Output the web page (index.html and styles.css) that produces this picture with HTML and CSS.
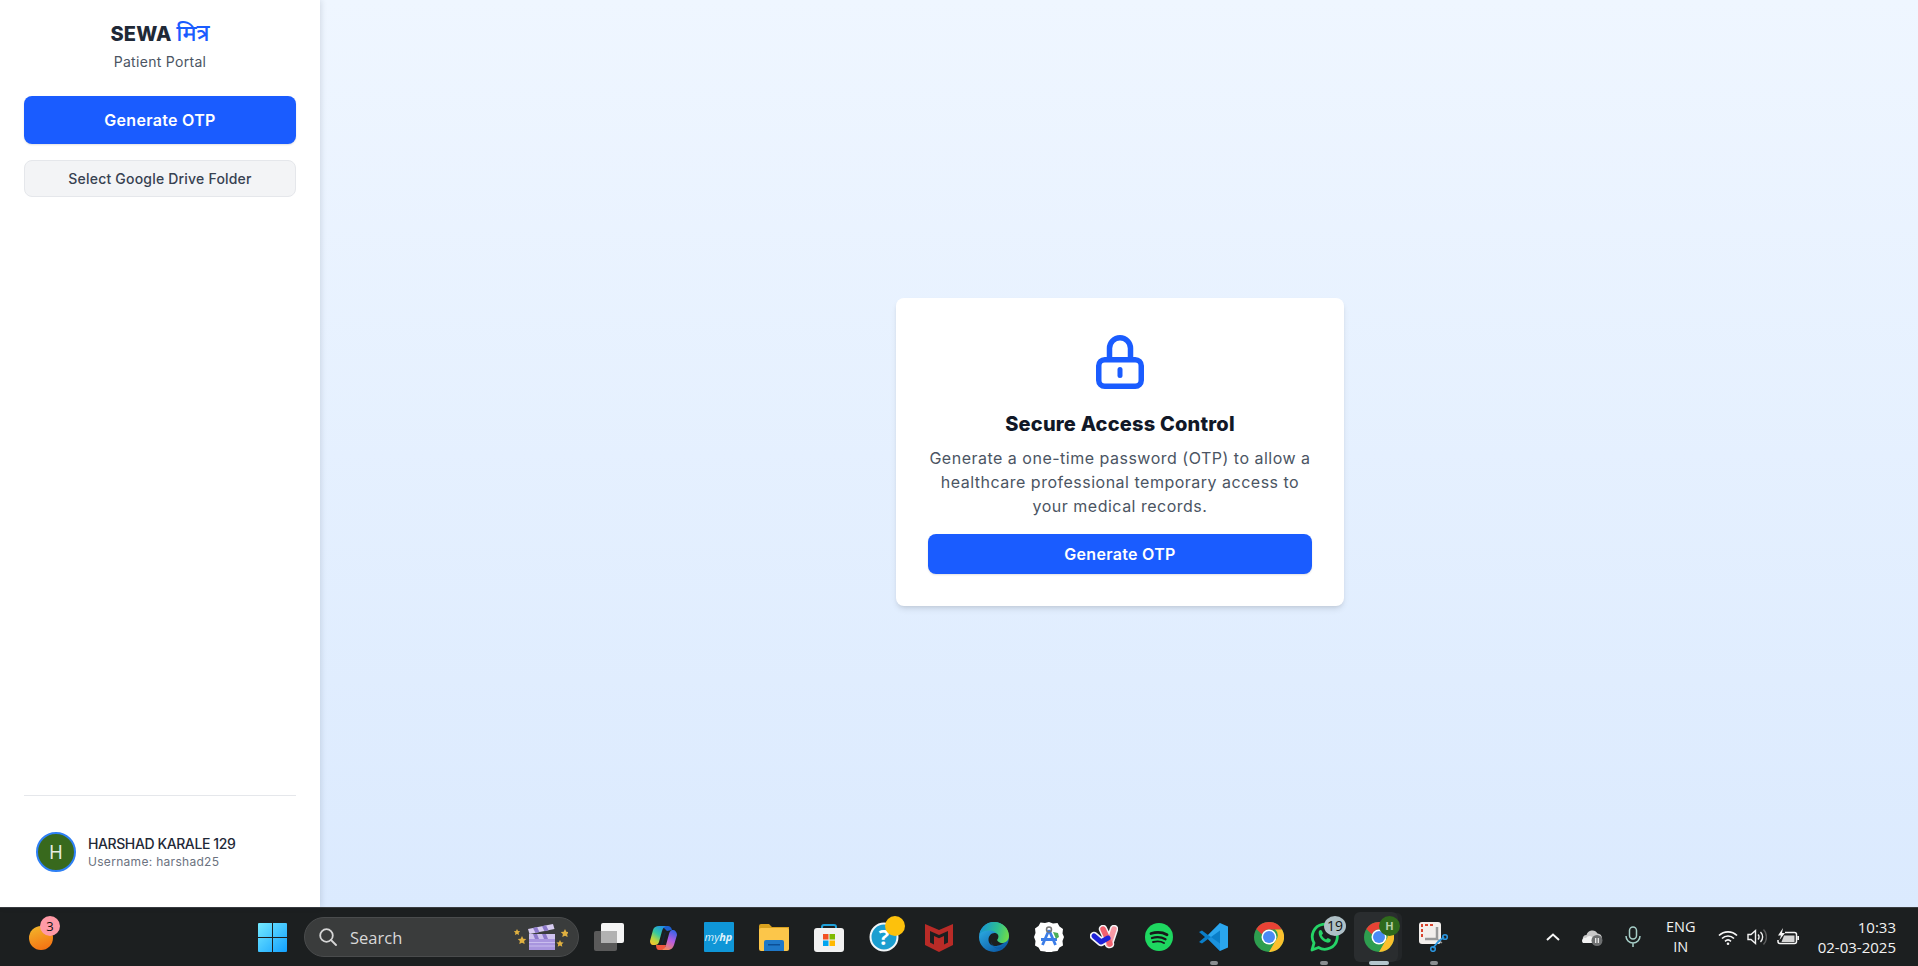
FILE: index.html
```html
<!DOCTYPE html>
<html lang="en">
<head>
    <meta charset="UTF-8">
    <meta name="viewport" content="width=device-width, initial-scale=1.0">
    <title>Patient Portal</title>
    <link rel="stylesheet" href="styles.css">
</head>
<body>
    <div class="app">
        <aside class="sidebar">
            <div class="brand">
                <h1 class="brand-title">SEWA <span class="brand-accent">मित्र</span></h1>
                <p class="brand-sub">Patient Portal</p>
            </div>
            <button class="btn btn-primary btn-side">Generate OTP</button>
            <button class="btn btn-secondary">Select Google Drive Folder</button>
            <div class="user-box">
                <div class="avatar">H</div>
                <div class="user-info">
                    <div class="user-name">HARSHAD KARALE 129</div>
                    <div class="user-handle">Username: harshad25</div>
                </div>
            </div>
        </aside>
        <main class="content">
            <section class="card">
                <svg class="lock" viewBox="0 0 64 64" width="64" height="64" fill="none" stroke="#1a5cff" stroke-width="5.500" stroke-linecap="round" stroke-linejoin="round">
                    <path d="M21.500 28V18.250a10.500 10.500 0 0 1 21 0V28"/>
                    <rect x="10.750" y="29.750" width="42.500" height="26.500" rx="6"/>
                    <path stroke-width="5" d="M32 39.500v6"/>
                </svg>
                <h2 class="card-title">Secure Access Control</h2>
                <p class="card-text">Generate a one-time password (OTP) to allow a healthcare professional temporary access to your medical records.</p>
                <button class="btn btn-primary btn-card">Generate OTP</button>
            </section>
        </main>
    </div>

    <footer class="taskbar">
        <div class="tb-widget">
            <span class="widget-ball"></span>
            <span class="widget-badge">3</span>
        </div>
        <svg class="tb-start" viewBox="0 0 29 29" width="29" height="29">
            <defs>
                <linearGradient id="win" x1="0" y1="0" x2="1" y2="1">
                    <stop offset="0" stop-color="#74eaff"/>
                    <stop offset="1" stop-color="#12a0ff"/>
                </linearGradient>
            </defs>
            <path fill="url(#win)" d="M1 0h13v14H0V1a1 1 0 0 1 1-1zM15 0h13a1 1 0 0 1 1 1v13H15zM0 15h14v14H1a1 1 0 0 1-1-1zM15 15h14v13a1 1 0 0 1-1 1H15z"/>
        </svg>
        <div class="tb-search">
            <svg viewBox="0 0 18 18" width="18" height="18" fill="none" stroke="#d6d6d6" stroke-width="1.800" stroke-linecap="round">
                <circle cx="7.500" cy="7.500" r="6.300"/>
                <path d="M12 12l5 5"/>
            </svg>
            <span class="search-label">Search</span>
            <svg class="search-art" viewBox="0 0 54 26" width="54" height="26">
                <path fill="#e0b040" d="M3 5l1 2 2.200.3-1.600 1.500.4 2.200L3 10l-2 1 .4-2.200L-.2 7.300 2 7zM8 12l1.300 2.700 3 .4-2.200 2 .6 3L8 18.700l-2.700 1.400.6-3-2.200-2 3-.4zM51 5l1.300 2.700 3 .4-2.200 2 .6 3-2.700-1.400-2.700 1.400.6-3-2.200-2 3-.4zM46 16l1.100 2.300 2.500.3-1.800 1.700.5 2.500-2.300-1.200-2.300 1.200.5-2.500-1.800-1.700 2.500-.3z"/>
                <path fill="#d9cdf2" d="M14 5l25-5 1.500 5-25 5z"/>
                <path fill="#8c78c9" d="M19 4l4-1 2.500 5-4 1zM28 2.300l4-1 2.500 5-4 1z"/>
                <rect x="15" y="10" width="26" height="5" fill="#cfc2ee"/>
                <path fill="#8c78c9" d="M19 10h4l2 5h-4zM28 10h4l2 5h-4z"/>
                <rect x="15" y="15" width="26" height="11" fill="#a895de"/>
                <path stroke="#c9bdee" stroke-width="1" d="M15 18.500h26M15 22h26"/>
            </svg>
        </div>

        <div class="tb-apps">
            <div class="tb-slot">
                <svg viewBox="0 0 30 28" width="30" height="28">
                    <rect x="0" y="8" width="23" height="20" rx="2" fill="#5a5a5a"/>
                    <rect x="7" y="0" width="23" height="20" rx="2" fill="#f4f4f4"/>
                    <rect x="7" y="8" width="16" height="12" fill="#b2b2b2"/>
                </svg>
            </div>
            <div class="tb-slot">
                <svg viewBox="0 0 27 25" width="27" height="25">
                    <defs>
                        <linearGradient id="cop1" x1="0.800" y1="0" x2="0.200" y2="1">
                            <stop offset="0" stop-color="#1f8fe8"/>
                            <stop offset="0.450" stop-color="#35c9a0"/>
                            <stop offset="0.750" stop-color="#b6d640"/>
                            <stop offset="1" stop-color="#f7c52e"/>
                        </linearGradient>
                        <linearGradient id="cop2" x1="0.700" y1="0" x2="0.300" y2="1">
                            <stop offset="0" stop-color="#3a63e8"/>
                            <stop offset="0.500" stop-color="#b85ce0"/>
                            <stop offset="1" stop-color="#f58a5a"/>
                        </linearGradient>
                    </defs>
                    <path fill="#1e5fd0" d="M12 1h6c2 0 3 1 4 4l-5 1z"/>
                    <path fill="#f0563c" d="M6 20h10l-1 3c-1 1-2 2-4 2h-2c-2 0-3-2-3-5z"/>
                    <path fill="url(#cop1)" d="M9 1h7c-2 1-3 2-4 5l-3 11c-.5 2-2 3-4 3H3c-2 0-3-2-3-4l3-11C4 2 6 1 9 1z"/>
                    <path fill="url(#cop2)" d="M19 5h4c2 0 4 2 4 5l-3 10c-1 3-3 5-7 5h-6c3-1 4-2 5-5l3-11c.5-2 1-3 3-4z"/>
                    <path fill="#10304f" opacity="0.500" d="M14 8l2-1-3.500 12-1.500 1z"/>
                </svg>
            </div>
            <div class="tb-slot">
                <div class="myhp"><span>my</span><em>hp</em></div>
            </div>
            <div class="tb-slot">
                <svg viewBox="0 0 30 28" width="30" height="28">
                    <path fill="#d9a11e" d="M0 3a2 2 0 0 1 2-2h8l3 3h17v5H0z"/>
                    <rect x="0" y="5" width="30" height="23" rx="2" fill="#fcc64a"/>
                    <path fill="#1f78c8" d="M5 19a2 2 0 0 1 2-2h16a2 2 0 0 1 2 2v9H5z"/>
                    <rect x="9" y="21" width="12" height="1.500" fill="#0c4f96"/>
                </svg>
            </div>
            <div class="tb-slot">
                <svg viewBox="0 0 30 30" width="30" height="30">
                    <path fill="none" stroke="#1fa0d8" stroke-width="2" d="M8 8V5a2 2 0 0 1 2-2h10a2 2 0 0 1 2 2v3"/>
                    <rect x="0" y="6" width="30" height="24" rx="3" fill="#f1f1f1"/>
                    <rect x="9" y="12" width="5.500" height="5.500" fill="#f25022"/>
                    <rect x="15.500" y="12" width="5.500" height="5.500" fill="#7fba00"/>
                    <rect x="9" y="18.500" width="5.500" height="5.500" fill="#00a4ef"/>
                    <rect x="15.500" y="18.500" width="5.500" height="5.500" fill="#ffb900"/>
                </svg>
            </div>
            <div class="tb-slot">
                <svg viewBox="0 0 30 30" width="30" height="30">
                    <circle cx="15" cy="15" r="13.500" fill="#1b9ed0" stroke="#f2f6f8" stroke-width="2"/>
                    <text x="15" y="23" class="help-mark">?</text>
                </svg>
                <span class="dot-yellow"></span>
            </div>
            <div class="tb-slot">
                <svg viewBox="0 0 28 30" width="28" height="30">
                    <path fill="#b92b27" d="M0 2l14 6 14-6v21l-14 7-14-7z"/>
                    <path fill="#1c1f20" d="M5 9l9 4 9-4v11.500l-4 2V14l-5 2.200L9 14v8.500l-4-2z"/>
                </svg>
            </div>
            <div class="tb-slot">
                <svg viewBox="0 0 30 30" width="30" height="30">
                    <defs>
                        <linearGradient id="edge1" x1="0" y1="0" x2="0.700" y2="1">
                            <stop offset="0" stop-color="#32bdf0"/>
                            <stop offset="1" stop-color="#0c5aa6"/>
                        </linearGradient>
                        <linearGradient id="edge2" x1="0" y1="0.300" x2="1" y2="0.500">
                            <stop offset="0" stop-color="#1593d8"/>
                            <stop offset="0.600" stop-color="#2fc08e"/>
                            <stop offset="1" stop-color="#6edb4c"/>
                        </linearGradient>
                    </defs>
                    <circle cx="15" cy="15" r="15" fill="url(#edge1)"/>
                    <path fill="url(#edge2)" d="M.5 12C2 5 8 0 15 0c9 0 15 6.500 15 14 0 4.500-3.500 7-7.500 7-3 0-5.500-.8-6.500-2.500 2-1 3.500-3 2.500-5.500C17 9 8 6 .5 12z"/>
                    <path fill="#1c1f20" d="M9.500 18c0-5 4-8 8-6.500 2.500 1 2.500 4.500.5 6.500 1 2.500 4 3.500 7 3-1 .5-5 3-9 3-4 0-6.500-3-6.500-6z"/>
                    <path fill="#0c5aa6" d="M12 19c.5 4 3 6.500 7 6.500 3 0 6-1.500 7-3.500-2 2.500-5 8-12 7.500 0 0 7 0 7-3-5 1-9-3-9-7.500z"/>
                </svg>
            </div>
            <div class="tb-slot">
                <svg viewBox="0 0 30 30" width="30" height="30">
                    <path fill="#fff" d="M15 0l4 1.500 4.500-.5 2 3.500 3.500 2.500-.5 4.500 1.500 3.500-1.500 4 .5 4.500-3.500 2-2 3.500-4.500.5-4 1.500-4-1.500-4.500-.5-2-3.500-3.500-2 .5-4.500L0 15l1.500-4L1 6.500 4.500 4l2-3.500 4.500.5z"/>
                    <path fill="none" stroke="#3b7de8" stroke-width="2.800" d="M15 8L8.500 23M15 8l6.500 15M7 17.500h16"/>
                    <circle cx="15" cy="7.500" r="2.500" fill="none" stroke="#777" stroke-width="1.500"/>
                    <path fill="#4bae58" d="M19 10l5 1 1 4-3 2z"/>
                </svg>
            </div>
            <div class="tb-slot">
                <svg viewBox="0 0 28 24" width="28" height="24" fill="none" stroke-linecap="round" stroke-linejoin="round">
                    <path stroke="#f4f4f6" stroke-width="8.500" d="M13 4l7 15M24 4l-5 15M4 11l7 6 7-4"/>
                    <path stroke="#f79aa5" stroke-width="5.500" d="M24 4l-5 15"/>
                    <path stroke="#f2616f" stroke-width="5.500" d="M13 4l7 15"/>
                    <path stroke="#1d22d8" stroke-width="5" d="M4 11l7 6 7-4"/>
                </svg>
            </div>
            <div class="tb-slot">
                <svg viewBox="0 0 28 28" width="28" height="28" fill="none" stroke="#17181a" stroke-linecap="round">
                    <circle cx="14" cy="14" r="14" fill="#1ed760" stroke="none"/>
                    <path stroke-width="2.800" d="M6 10.500c6-1.800 11.500-1.300 16 1.200"/>
                    <path stroke-width="2.300" d="M7 15c5-1.500 9.500-1 13.500 1.200"/>
                    <path stroke-width="1.900" d="M8 19c4-1 8-.8 11 1"/>
                </svg>
            </div>
            <div class="tb-slot">
                <svg viewBox="0 0 30 30" width="30" height="30">
                    <path fill="#0a7ec8" d="M21 1l-12 12-6-4.500L0 10l6 5-6 5 3 1.500L9 17l12 12z"/>
                    <path fill="#2aa6ee" d="M21 1l8 3.500v21L21 29V8.500L12 15l-3-2z"/>
                    <path fill="#1b92dd" d="M21 21.500L12 15l-3 2 12 12z"/>
                </svg>
                <span class="pill"></span>
            </div>
            <div class="tb-slot">
                <svg viewBox="0 0 30 30" width="30" height="30">
                    <circle cx="15" cy="15" r="15" fill="#2e9e4f"/>
                    <path fill="#e94235" d="M15 0a15 15 0 0 1 13 7.500H15a7.500 7.500 0 0 0-7 5L2.300 7A15 15 0 0 1 15 0z"/>
                    <path fill="#fbc02d" d="M28 7.500A15 15 0 0 1 15 30l6.500-11.300a7.500 7.500 0 0 0-.5-11.200z"/>
                    <circle cx="15" cy="15" r="7.500" fill="#fff"/>
                    <circle cx="15" cy="15" r="6" fill="#4a8af4"/>
                </svg>
            </div>
            <div class="tb-slot">
                <svg viewBox="0 0 30 30" width="30" height="30" fill="none">
                    <path stroke="#25d366" stroke-width="2.800" d="M3 28l2-7A12.500 12.500 0 1 1 9.500 25.500z" stroke-linejoin="round"/>
                    <path fill="#25d366" d="M10 9c1-1.500 2.500-1 3 0l1 2.500-1.300 1.800c1 2 2.500 3.300 4.300 4.200l1.800-1.500 2.700 1.300c.7 1 0 2.700-1.500 3.300-5 1-12-6-10-12z"/>
                </svg>
                <span class="count-badge">19</span>
                <span class="pill"></span>
            </div>
            <div class="tb-slot tb-slot-active">
                <svg viewBox="0 0 30 30" width="30" height="30">
                    <circle cx="15" cy="15" r="15" fill="#2e9e4f"/>
                    <path fill="#e94235" d="M15 0a15 15 0 0 1 13 7.500H15a7.500 7.500 0 0 0-7 5L2.300 7A15 15 0 0 1 15 0z"/>
                    <path fill="#fbc02d" d="M28 7.500A15 15 0 0 1 15 30l6.500-11.300a7.500 7.500 0 0 0-.5-11.200z"/>
                    <circle cx="15" cy="15" r="7.500" fill="#fff"/>
                    <circle cx="15" cy="15" r="6" fill="#4a8af4"/>
                </svg>
                <span class="profile-badge">H</span>
                <span class="pill pill-active"></span>
            </div>
            <div class="tb-slot">
                <svg viewBox="0 0 30 30" width="30" height="30" fill="none">
                    <rect x="0" y="0" width="22" height="22" rx="3" fill="#f3efec"/>
                    <path stroke="#d9442e" stroke-width="2" stroke-dasharray="3 2" d="M3 15V3h12"/>
                    <path stroke="#9a9a9a" stroke-width="2.500" d="M6 17h12V5"/>
                    <path stroke="#9a9a9a" stroke-width="1.500" d="M18 17l5 4"/>
                    <path stroke="#2b95de" stroke-width="1.800" d="M14 26l5-6 6-5"/>
                    <circle cx="26" cy="15" r="2.300" stroke="#2b95de" stroke-width="1.600"/>
                    <circle cx="14" cy="27" r="2.300" stroke="#2b95de" stroke-width="1.600"/>
                </svg>
                <span class="pill"></span>
            </div>
        </div>

        <div class="tb-tray">
            <svg viewBox="0 0 14 8" width="14" height="8" fill="none" stroke="#f6f6f6" stroke-width="2">
                <path d="M1 7l6-5.500L13 7"/>
            </svg>
            <svg class="tray-cloud" viewBox="0 0 22 18" width="22" height="18">
                <path fill="#c9c9c9" d="M5 15a4 4 0 0 1-.5-8 6 6 0 0 1 11-1.500A5 5 0 0 1 20 10v2H8v3z"/>
                <path fill="#f2f2f2" d="M1 15a3 3 0 0 1 3-5 4 4 0 0 1 7 0h3v5z"/>
                <circle cx="15" cy="12.500" r="5.500" fill="#6d6f70"/>
                <path stroke="#f2f2f2" stroke-width="1.200" d="M13.700 10v5M16.300 10v5"/>
            </svg>
            <svg class="tray-mic" viewBox="0 0 16 22" width="16" height="22" fill="none" stroke="#a7cfc8" stroke-width="1.500">
                <rect x="4.500" y="1" width="7" height="12" rx="3.500"/>
                <path d="M1 10a7 7 0 0 0 14 0M8 17v4"/>
            </svg>
            <div class="tray-lang">ENG<br>IN</div>
            <svg class="tray-wifi" viewBox="0 0 20 15" width="20" height="15" fill="none" stroke="#f6f6f6" stroke-width="1.700">
                <path d="M1 5.500a13 13 0 0 1 18 0M4 8.500a8.500 8.500 0 0 1 12 0M7 11.300a4.500 4.500 0 0 1 6 0"/>
                <circle cx="10" cy="13.700" r="1.300" fill="#f6f6f6" stroke="none"/>
            </svg>
            <svg class="tray-volume" viewBox="0 0 20 18" width="20" height="18" fill="none" stroke="#f2f2f2" stroke-width="1.400">
                <path d="M1 6.500h3L8.500 2.500v13L4 11.500H1z"/>
                <path d="M11 6.500a3.500 3.500 0 0 1 0 5M13.500 4a7 7 0 0 1 0 10"/>
                <path stroke="#5c5c5c" d="M16.500 1.500a11 11 0 0 1 0 15"/>
            </svg>
            <svg class="tray-battery" viewBox="0 0 22 18" width="22" height="18" fill="none">
                <path stroke="#f6f6f6" stroke-width="1.500" d="M8 4.500h9.500a2 2 0 0 1 2 2v7a2 2 0 0 1-2 2H3a2 2 0 0 1-2-2V12"/>
                <path fill="#d6d6d6" d="M4.500 14L7 7.500h10.500V14z"/>
                <path fill="#f6f6f6" d="M20.300 8h1.700v4h-1.700z"/>
                <path fill="#f6f6f6" d="M6 0L1 7.500h3L2.500 12 8 5H5z"/>
            </svg>
            <div class="tray-clock">
                <div>10:33</div>
                <div>02-03-2025</div>
            </div>
        </div>
    </footer>
</body>
</html>
```

FILE: styles.css
```css
* {
    box-sizing: border-box;
}
html, body {
    height: 100%;
    margin: 0;
    overflow: hidden;
}
body {
    display: flex;
    flex-direction: column;
    font-family: "Inter", "Noto Sans", sans-serif;
    color: #1f2937;
}
h1, h2, p {
    margin: 0;
}

.app {
    flex: 1;
    display: flex;
    min-height: 0;
}

/* sidebar */
.sidebar {
    width: 320px;
    padding: 0 24px;
    display: flex;
    flex-direction: column;
    background: #fff;
    box-shadow: 1px 0 6px rgba(31, 41, 55, 0.14);
    position: relative;
}
.brand {
    height: 96px;
    padding-top: 20px;
    text-align: center;
}
.brand-title {
    font-size: 20px;
    line-height: 28px;
    font-weight: 800;
    letter-spacing: 0.2px;
    color: #1f2937;
}
.brand-accent {
    color: #1a5cff;
    font-size: 23px;
    line-height: 20px;
    font-weight: 500;
    letter-spacing: 0;
    font-family: "Noto Sans", "Noto Sans Devanagari", "FreeSans", sans-serif;
}
.brand-sub {
    margin-top: 4px;
    font-size: 14px;
    line-height: 20px;
    letter-spacing: 0.3px;
    color: #4b5563;
}
.btn {
    display: block;
    width: 100%;
    border-radius: 8px;
    font-family: inherit;
    cursor: pointer;
}
.btn-primary {
    border: none;
    background: #1a5cff;
    color: #fff;
    font-size: 16px;
    font-weight: 600;
    letter-spacing: 0.3px;
    box-shadow: 0 1px 2px rgba(0, 0, 0, 0.12);
}
.btn-side {
    height: 48px;
    margin-bottom: 16px;
}
.btn-secondary {
    height: 37px;
    border: 1px solid #e5e7eb;
    background: #f3f4f6;
    color: #374151;
    font-size: 14px;
    font-weight: 500;
    letter-spacing: 0.2px;
}
.user-box {
    margin-top: auto;
    height: 112px;
    padding: 36px 12px 0;
    display: flex;
    gap: 12px;
    border-top: 1px solid #e5e7eb;
}
.avatar {
    width: 40px;
    height: 40px;
    flex: none;
    border-radius: 50%;
    border: 2px solid #2f80f5;
    background: #38691d;
    color: #e6ece2;
    font-size: 18px;
    display: flex;
    align-items: center;
    justify-content: center;
}
.user-info {
    padding-top: 2px;
}
.user-name {
    font-size: 14px;
    line-height: 20px;
    font-weight: 500;
    letter-spacing: -0.4px;
    color: #1f2937;
}
.user-handle {
    font-size: 12px;
    line-height: 16px;
    letter-spacing: 0.3px;
    color: #6b7280;
}

/* main panel */
.content {
    flex: 1;
    display: flex;
    align-items: center;
    justify-content: center;
    padding: 0 0 3px 2px;
    background: linear-gradient(to bottom, #eff6ff, #dbeafe);
}
.card {
    width: 448px;
    padding: 32px;
    background: #fff;
    border-radius: 8px;
    box-shadow: 0 4px 6px -1px rgba(0, 0, 0, 0.1), 0 2px 4px -2px rgba(0, 0, 0, 0.1);
    text-align: center;
}
.lock {
    display: block;
    margin: 0 auto 16px;
}
.card-title {
    font-size: 20px;
    line-height: 28px;
    font-weight: 800;
    letter-spacing: 0.2px;
    color: #111827;
    margin-bottom: 8px;
}
.card-text {
    font-size: 16px;
    line-height: 24px;
    letter-spacing: 0.5px;
    color: #4b5563;
    margin-bottom: 16px;
}
.btn-card {
    height: 40px;
}

/* windows taskbar */
.taskbar {
    height: 59px;
    flex: none;
    display: flex;
    align-items: center;
    background: #1c1f20;
    border-top: 1px solid #3a3d40;
    font-family: "Open Sans", "Noto Sans", sans-serif;
    color: #f2f2f2;
}
.tb-widget {
    width: 258px;
    height: 100%;
    padding-left: 29px;
    display: flex;
    align-items: center;
    position: relative;
}
.widget-ball {
    width: 24px;
    height: 24px;
    margin-top: 2px;
    border-radius: 50%;
    background: linear-gradient(160deg, #f2b92c, #f56a10);
}
.widget-badge {
    position: absolute;
    left: 40px;
    top: 8px;
    width: 20px;
    height: 20px;
    border-radius: 50%;
    background: #ff9aa6;
    color: #111;
    font-size: 13px;
    line-height: 20px;
    text-align: center;
}
.tb-start {
    flex: none;
    margin-right: 17px;
}
.tb-search {
    width: 275px;
    height: 40px;
    flex: none;
    margin-right: 2px;
    padding: 0 10px 0 14px;
    display: flex;
    align-items: center;
    gap: 13px;
    border-radius: 20px;
    border: 1px solid #4a4c4d;
    background: #3a3c3c;
}
.search-label {
    font-size: 16.500px;
    color: #d8d8d8;
}
.search-art {
    margin-left: auto;
}
.tb-apps {
    display: flex;
    height: 100%;
}
.tb-slot {
    width: 55px;
    height: 100%;
    display: flex;
    align-items: center;
    justify-content: center;
    position: relative;
}
.myhp {
    width: 30px;
    height: 30px;
    background: #0f96d7;
    color: #dff2fb;
    font-size: 11px;
    font-style: italic;
    line-height: 30px;
    text-align: center;
    border-radius: 1px;
}
.myhp em {
    font-weight: 700;
}
.help-mark {
    fill: #fff;
    font-family: "Open Sans", sans-serif;
    font-size: 22px;
    font-weight: 700;
    text-anchor: middle;
}
.dot-yellow {
    position: absolute;
    left: 29px;
    top: 8px;
    width: 20px;
    height: 20px;
    border-radius: 50%;
    background: #fdc10c;
}
.count-badge {
    position: absolute;
    left: 28px;
    top: 8px;
    width: 22px;
    height: 20px;
    border-radius: 50%;
    background: #afc0c6;
    color: #111;
    font-size: 14px;
    line-height: 20px;
    text-align: center;
}
.profile-badge {
    position: absolute;
    left: 28px;
    top: 8px;
    width: 21px;
    height: 20px;
    border-radius: 50%;
    background: #2f6a1c;
    color: #b7cfa8;
    font-size: 11px;
    font-weight: 700;
    line-height: 20px;
    text-align: center;
}
.tb-slot-active::before {
    content: "";
    position: absolute;
    left: 3px;
    top: 4px;
    width: 44px;
    height: 50px;
    border-radius: 6px;
    background: #2a2d2f;
    box-shadow: 5px 0 0 -1px #232628;
}
.tb-slot-active svg {
    position: relative;
}
.pill {
    position: absolute;
    left: 23.500px;
    bottom: 1px;
    width: 8px;
    height: 4px;
    border-radius: 2px;
    background: #8a8d8f;
}
.pill-active {
    left: 17.500px;
    width: 20px;
    background: #b5c6cd;
}

/* system tray */
.tb-tray {
    margin-left: auto;
    padding-right: 22px;
    display: flex;
    align-items: center;
}
.tray-cloud {
    margin-left: 22px;
}
.tray-mic {
    margin-left: 21px;
}
.tray-lang {
    width: 30px;
    margin-left: 25px;
    font-size: 14.500px;
    line-height: 20px;
    text-align: center;
}
.tray-wifi {
    margin-left: 22px;
}
.tray-volume {
    margin-left: 9px;
}
.tray-battery {
    margin-left: 10px;
}
.tray-clock {
    margin-left: 19px;
    font-size: 15px;
    line-height: 20px;
    text-align: right;
}
```
